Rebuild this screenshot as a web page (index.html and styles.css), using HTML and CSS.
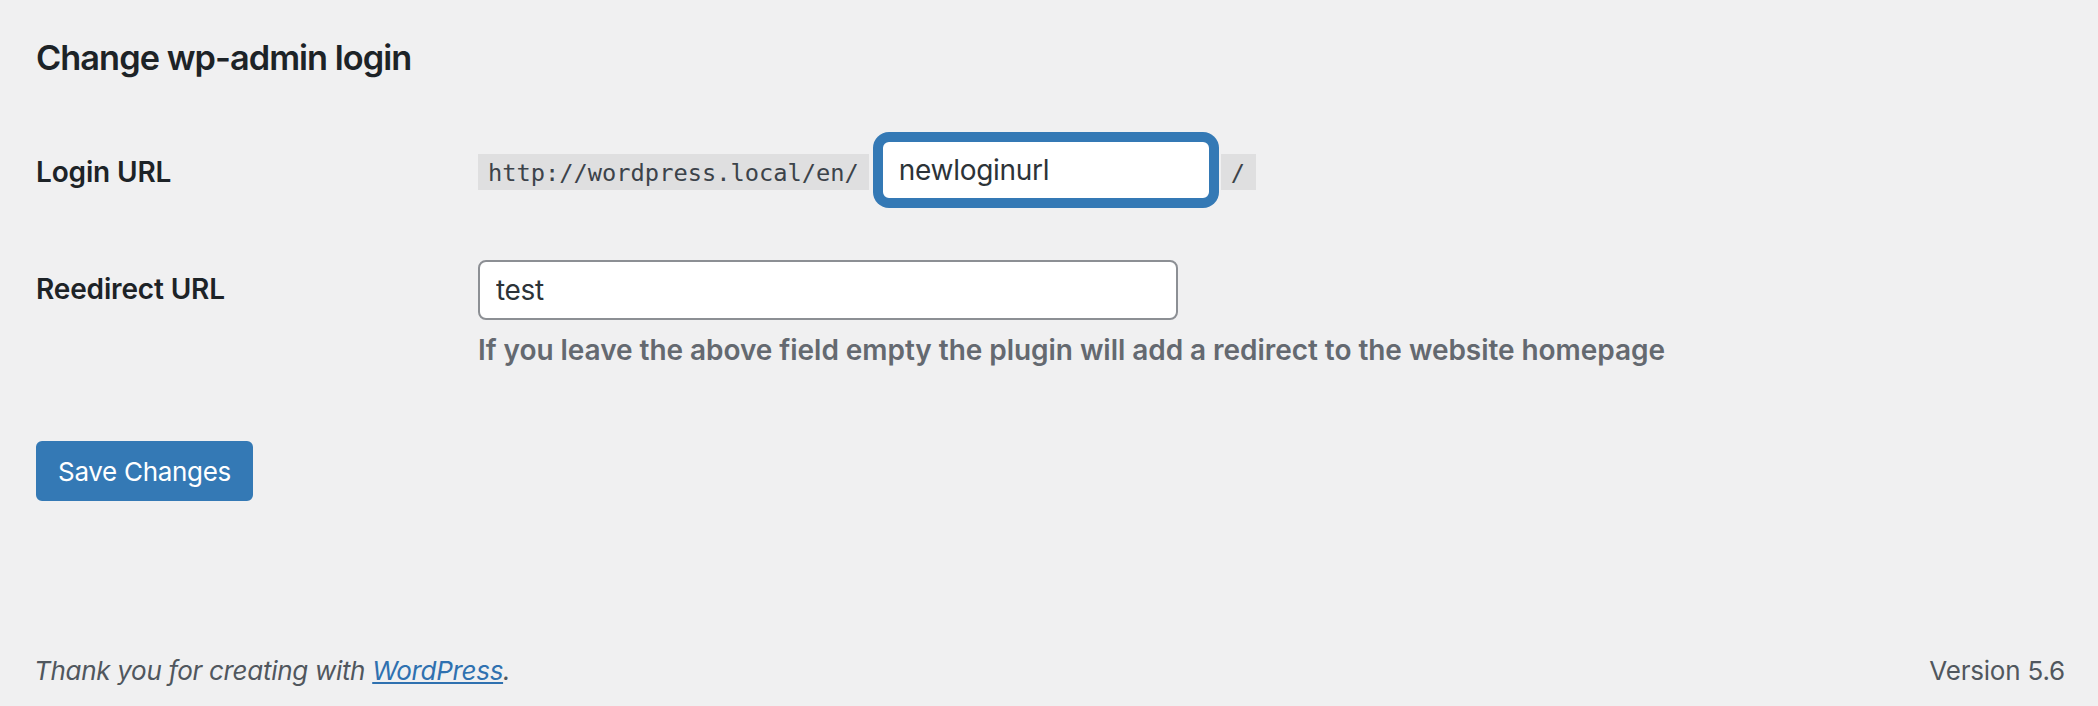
FILE: index.html
```html
<!DOCTYPE html>
<html lang="en">
<head>
<meta charset="utf-8">
<title>Change wp-admin login</title>
<link rel="stylesheet" href="styles.css">
</head>
<body>
<div class="page">
  <main class="wrap">
    <h2 class="title">Change wp-admin login</h2>
    <form class="settings">
      <div class="row row-login">
        <label class="label" for="login-url">Login URL</label>
        <div class="field field-inline">
          <code class="prefix">http://wordpress.local/en/</code>
          <input id="login-url" class="input input-focus" type="text" value="newloginurl">
          <code class="suffix">/</code>
        </div>
      </div>
      <div class="row row-redirect">
        <label class="label label-redirect" for="redirect-url">Reedirect URL</label>
        <div class="field">
          <input id="redirect-url" class="input input-regular" type="text" value="test">
          <p class="description">If you leave the above field empty the plugin will add a redirect to the website homepage</p>
        </div>
      </div>
      <div class="submit">
        <button type="button" class="button-primary">Save Changes</button>
      </div>
    </form>
  </main>
  <footer class="footer">
    <p class="thanks">Thank you for creating with <a href="#">WordPress</a>.</p>
    <p class="version">Version 5.6</p>
  </footer>
</div>
</body>
</html>
```

FILE: styles.css
```css
html, body {
  margin: 0;
  padding: 0;
  height: 706px;
  overflow: hidden;
  background: #f0f0f1;
}

body {
  font-family: Inter, "Noto Sans", sans-serif;
  color: #1d2327;
}

.page {
  display: flex;
  flex-direction: column;
  height: 706px;
}

.wrap {
  padding-left: 36px;
}

.title {
  margin: 38px 0 0;
  font-size: 34.3px;
  line-height: 40px;
  font-weight: 600;
  color: #1d2327;
  letter-spacing: -0.95px;
}

.settings {
  margin-top: 62px;
}

.row {
  display: grid;
  grid-template-columns: 442px auto;
  align-items: start;
}

.label {
  font-size: 28px;
  line-height: 36px;
  font-weight: 600;
  color: #1d2327;
  padding-top: 14px;
  letter-spacing: -0.15px;
}

.field-inline {
  display: flex;
  align-items: flex-start;
}

.prefix, .suffix {
  font-family: "DejaVu Sans Mono", "Liberation Mono", monospace;
  font-size: 23.7px;
  line-height: 26px;
  padding: 6px 10px 4px;
  margin-top: 14px;
  background: rgba(0, 0, 0, 0.07);
  color: #3c434a;
}

.suffix {
  padding: 6px 11px 4px 10px;
}

.input {
  box-sizing: border-box;
  height: 60px;
  padding: 0 16px;
  font-family: Inter, "Noto Sans", sans-serif;
  font-size: 28px;
  color: #2c3338;
  background: #fff;
  border: 2px solid #8c8f94;
  border-radius: 8px;
  outline: none;
  letter-spacing: -0.3px;
}

.input-focus {
  width: 330px;
  margin: 0 10px 0 12px;
  border-color: #3479b5;
  box-shadow: 0 0 0 8px #3479b5;
}

.row-redirect {
  margin-top: 60px;
}

.label-redirect {
  padding-top: 11px;
}

.input-regular {
  display: block;
  width: 700px;
}

.description {
  margin: 11px 0 0;
  font-size: 28px;
  line-height: 38px;
  font-weight: 600;
  color: #646970;
  letter-spacing: -0.05px;
}

.submit {
  margin-top: 72px;
}

.button-primary {
  height: 60px;
  padding: 0 20px;
  font-family: Inter, "Noto Sans", sans-serif;
  font-size: 26px;
  color: #fff;
  background: #3479b5;
  border: 2px solid #3479b5;
  border-radius: 6px;
  letter-spacing: -0.3px;
  cursor: pointer;
}

.footer {
  margin-top: auto;
  display: flex;
  justify-content: space-between;
  align-items: baseline;
  padding: 0 33px 15px 34px;
  font-size: 26px;
  line-height: 40px;
  color: #50575e;
}

.footer p {
  margin: 0;
}

.thanks {
  font-style: italic;
  letter-spacing: -0.3px;
}

.version {
  letter-spacing: -0.2px;
}

.thanks a {
  color: #2f71b0;
  text-decoration: underline;
}
```
